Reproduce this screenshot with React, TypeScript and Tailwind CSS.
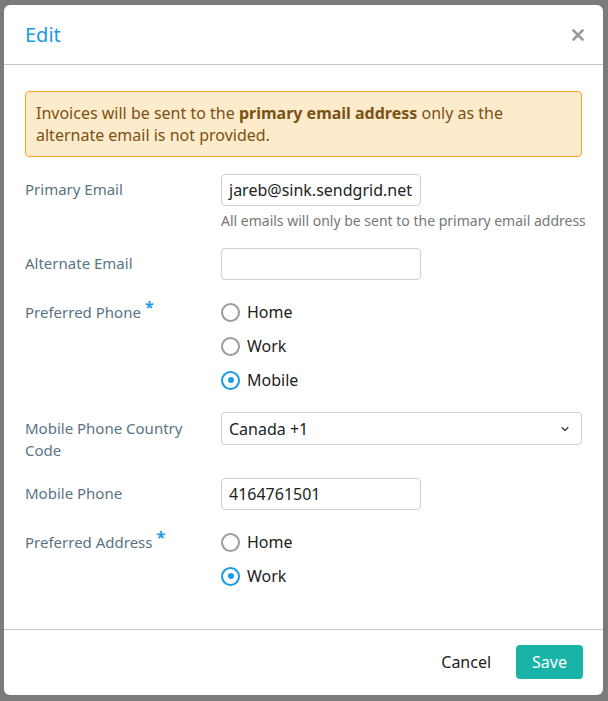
import React from 'react';
import { ChevronDown } from 'lucide-react';

function Radio({ label, checked }: { label: string; checked?: boolean }) {
  return (
    <div className="flex h-[30px] items-center">
      {checked ? (
        <span className="flex h-[19px] w-[19px] items-center justify-center rounded-full border-2 border-[#1a9be6]">
          <span className="h-[6px] w-[6px] rounded-full bg-[#1a9be6]" />
        </span>
      ) : (
        <span className="h-[19px] w-[19px] rounded-full border-2 border-[#9c9c9c]" />
      )}
      <span className="ml-[7px] text-[16px] text-[#222]">{label}</span>
    </div>
  );
}

function Label({ children, required }: { children: React.ReactNode; required?: boolean }) {
  return (
    <div className="w-[196px] shrink-0 pt-[4px] pr-[20px] text-[15px] leading-[22px] text-[#587482]">
      {children}
      {required && <span className="relative top-[-5px] ml-[4px] text-[16px] font-bold text-[#1a9be6]">*</span>}
    </div>
  );
}

function TextInput({ value }: { value?: string }) {
  return (
    <div className="flex h-[32px] w-[200px] items-center rounded-[4px] border border-[#cfcfcf] px-[7px] text-[16px] text-[#222]">
      {value}
    </div>
  );
}

export default function App() {
  return (
    <div
      className="h-[701px] w-full bg-[#7b7b7b] pt-[5px] pl-[4px] pr-[5px]"
      style={{ fontFamily: '"Noto Sans", "Open Sans", sans-serif' }}
    >
      <div className="flex h-[690px] flex-col rounded-[6px] bg-white">
        <div className="flex h-[60px] items-center justify-between border-b border-[#c6c6c6] pl-[21px] pr-[19px]">
          <h2 className="text-[20px] text-[#1a9be6]">Edit</h2>
          <svg width="12" height="12" viewBox="0 0 12 12" className="text-[#9a9a9a]">
            <path d="M1.5 1.5 L10.5 10.5 M10.5 1.5 L1.5 10.5" stroke="currentColor" strokeWidth="2.6" strokeLinecap="round" />
          </svg>
        </div>

        <div className="flex-1 px-[21px] pt-[26px]">
          <div className="mb-[17px] rounded-[4px] border border-[#f5a623] bg-[#fdebcc] py-[10px] pl-[10px] pr-[12px] text-[16px] leading-[22px] text-[#7a5214]">
            Invoices will be sent to the <b>primary email address</b> only as the alternate email is not provided.
          </div>

          <div className="mb-[17px] flex">
            <Label>Primary Email</Label>
            <div>
              <TextInput value="jareb@sink.sendgrid.net" />
              <div className="mt-[5px] whitespace-nowrap text-[14px] leading-[20px] text-[#777]">
                All emails will only be sent to the primary email address
              </div>
            </div>
          </div>

          <div className="mb-[17px] flex">
            <Label>Alternate Email</Label>
            <TextInput />
          </div>

          <div className="mb-[17px] flex">
            <Label required>Preferred Phone</Label>
            <div className="flex flex-col gap-[4px]">
              <Radio label="Home" />
              <Radio label="Work" />
              <Radio label="Mobile" checked />
            </div>
          </div>

          <div className="mb-[17px] flex">
            <div className="w-[196px] shrink-0 pt-[5px] pr-[20px] text-[15px] leading-[22px] text-[#587482]">
              Mobile Phone Country Code
            </div>
            <div className="flex h-[33px] flex-1 items-center justify-between rounded-[4px] border border-[#cfcfcf] pl-[7px] pr-[10px] text-[16px] text-[#222]">
              <span>Canada +1</span>
              <ChevronDown size={12} strokeWidth={2.2} className="text-[#333]" />
            </div>
          </div>

          <div className="mb-[17px] flex">
            <Label>Mobile Phone</Label>
            <TextInput value="4164761501" />
          </div>

          <div className="flex">
            <Label required>Preferred Address</Label>
            <div className="flex flex-col gap-[4px]">
              <Radio label="Home" />
              <Radio label="Work" checked />
            </div>
          </div>
        </div>

        <div className="flex items-center justify-end gap-[13px] border-t border-[#c6c6c6] pt-[15px] pr-[20px] pb-[16px]">
          <button className="px-[12px] text-[16px] text-[#222]">Cancel</button>
          <button className="h-[34px] rounded-[4px] bg-[#1ab3a7] px-[16px] text-[16px] text-white">Save</button>
        </div>
      </div>
    </div>
  );
}
